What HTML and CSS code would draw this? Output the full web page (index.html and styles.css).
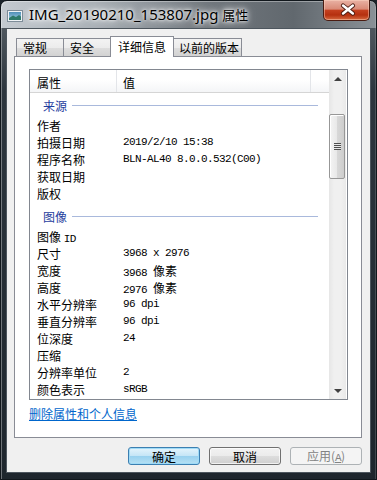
FILE: index.html
```html
<!DOCTYPE html>
<html lang="zh-CN">
<head>
    <meta charset="UTF-8">
    <meta name="viewport" content="width=device-width, initial-scale=1.0">
    <title>IMG_20190210_153807.jpg 属性</title>
    <link rel="stylesheet" href="styles.css">
</head>
<body>
    <div class="window">
        <div class="titlebar">
            <svg class="app-icon" width="16" height="12" viewBox="0 0 16 12">
                <defs>
                    <linearGradient id="sky" x1="0" y1="0" x2="0" y2="1">
                        <stop offset="0" stop-color="#4f8fb8"/>
                        <stop offset="1" stop-color="#a9d2e6"/>
                    </linearGradient>
                </defs>
                <rect x="0.5" y="0.5" width="15" height="11" fill="#eef2f5" stroke="#7d8c98"/>
                <rect x="2" y="2" width="12" height="8" fill="url(#sky)"/>
                <path d="M2 8 L6 5.5 L9 7 L12 5 L14 6.5 L14 10 L2 10 Z" fill="#2f7a6a"/>
            </svg>
            <span class="caption">IMG_20190210_153807.jpg <span class="caption-cjk">属性</span></span>
            <button class="close-btn" type="button">
                <svg width="46" height="20" viewBox="0 0 46 20">
                    <path d="M19.5 5.5 L29.5 13.5 M29.5 5.5 L19.5 13.5" stroke="#4a1a10" stroke-width="4.5" stroke-linecap="round"/>
                    <path d="M19.5 5.5 L29.5 13.5 M29.5 5.5 L19.5 13.5" stroke="#ffffff" stroke-width="2.6" stroke-linecap="round"/>
                </svg>
            </button>
        </div>

        <div class="client">
            <div class="tabs">
                <div class="tab tab-general">常规</div>
                <div class="tab tab-security">安全</div>
                <div class="tab tab-details active">详细信息</div>
                <div class="tab tab-versions">以前的版本</div>
            </div>

            <div class="panel">
                <div class="listview">
                    <div class="list-main">
                        <div class="list-head">
                            <div class="col-name">属性</div>
                            <div class="col-value">值</div>
                            <div class="col-rest"></div>
                        </div>
                        <div class="list-body">
                            <div class="group first"><span class="group-title">来源</span><span class="group-line"></span></div>
                            <div class="row"><span>作者</span><span></span></div>
                            <div class="row"><span>拍摄日期</span><span class="num">2019/2/10 15:38</span></div>
                            <div class="row"><span>程序名称</span><span class="num">BLN-AL40 8.0.0.532(C00)</span></div>
                            <div class="row"><span>获取日期</span><span></span></div>
                            <div class="row"><span>版权</span><span></span></div>

                            <div class="group"><span class="group-title">图像</span><span class="group-line"></span></div>
                            <div class="row"><span>图像 <span class="num">ID</span></span><span></span></div>
                            <div class="row"><span>尺寸</span><span class="num">3968 x 2976</span></div>
                            <div class="row"><span>宽度</span><span><span class="num">3968 </span>像素</span></div>
                            <div class="row"><span>高度</span><span><span class="num">2976 </span>像素</span></div>
                            <div class="row"><span>水平分辨率</span><span class="num">96 dpi</span></div>
                            <div class="row"><span>垂直分辨率</span><span class="num">96 dpi</span></div>
                            <div class="row"><span>位深度</span><span class="num">24</span></div>
                            <div class="row"><span>压缩</span><span></span></div>
                            <div class="row"><span>分辨率单位</span><span class="num">2</span></div>
                            <div class="row"><span>颜色表示</span><span class="num">sRGB</span></div>
                        </div>
                    </div>
                    <div class="scrollbar">
                        <div class="arrow arrow-up"></div>
                        <div class="thumb"><div class="grip"></div></div>
                        <div class="track-rest"></div>
                        <div class="arrow arrow-down"></div>
                    </div>
                </div>
                <a class="remove-link" href="#">删除属性和个人信息</a>
            </div>

            <div class="buttons">
                <button class="btn primary" type="button">确定</button>
                <button class="btn" type="button">取消</button>
                <button class="btn" type="button" disabled>应用(<u class="num">A</u>)</button>
            </div>
        </div>
    </div>
</body>
</html>
```

FILE: styles.css
```css
body {
    margin: 0;
    background: #1b232a;
    font-family: "Noto Sans CJK SC", sans-serif;
    font-size: 12px;
    color: #000;
}

/* window frame */
.window {
    width: 377px;
    height: 480px;
    box-sizing: border-box;
    border: 1px solid #11171c;
    border-radius: 7px 7px 0 0;
    padding: 0 5px 6px;
    display: flex;
    flex-direction: column;
    background:
        linear-gradient(to right, #c4cad0 0%, #aab1b7 25%, #71777d 55%, #61686e 78%, #8a9197 100%) top / 100% 27px no-repeat,
        linear-gradient(to bottom, #5d656c 0, #2d363e 90px, #1e262d 100%);
    box-shadow: inset 1px 1px 0 rgba(255, 255, 255, 0.35), inset -1px 0 0 rgba(255, 255, 255, 0.15);
}
.titlebar {
    height: 27px;
    display: flex;
    align-items: flex-start;
    flex-shrink: 0;
}
.app-icon {
    margin: 9px 0 0 1px;
}
.caption {
    margin: 4px 0 0 6px;
    font-family: "Noto Sans", "Noto Sans CJK SC", sans-serif;
    font-size: 15px;
    line-height: 18px;
    text-shadow: 0 0 6px #fff, 0 0 3px #fff, 0 0 10px rgba(255, 255, 255, 0.8);
    white-space: nowrap;
}
.caption-cjk {
    font-family: "Noto Sans CJK SC", sans-serif;
    font-size: 13px;
}
.close-btn {
    margin: -1px 1px 0 auto;
    width: 47px;
    height: 21px;
    padding: 0;
    border: 1px solid #4a1c12;
    border-top: none;
    border-radius: 0 0 5px 5px;
    background: linear-gradient(#e9b2a4 0%, #d98a77 45%, #c4401f 52%, #b5300f 75%, #d66a40 100%);
    box-shadow: inset 0 0 0 1px rgba(255, 220, 200, 0.45);
    display: flex;
    align-items: center;
    justify-content: center;
}

/* client area */
.client {
    height: 445px;
    box-sizing: border-box;
    border: 1px solid #4d565e;
    background: #f0f0f0;
    display: flex;
    flex-direction: column;
}

.tabs {
    display: flex;
    align-items: flex-start;
    height: 21px;
    margin: 7px 0 0 9px;
    position: relative;
    z-index: 1;
}
.tab {
    box-sizing: border-box;
    height: 18px;
    margin-top: 2px;
    padding-left: 6px;
    border: 1px solid #898c95;
    border-bottom: none;
    line-height: 17px;
    background: linear-gradient(#f3f3f3, #ececec 50%, #dedede 51%, #d2d2d2);
    white-space: nowrap;
}
.tab-general { width: 48px; }
.tab-security { width: 49px; margin-left: -1px; }
.tab-details { width: 64px; margin-left: -2px; }
.tab-versions { width: 69px; margin-left: -1px; padding-left: 5px; }
.tab.active {
    height: 21px;
    margin-top: 0;
    padding-left: 7px;
    line-height: 19px;
    background: #fff;
    position: relative;
    z-index: 2;
}

.panel {
    box-sizing: border-box;
    width: 348px;
    height: 382px;
    margin: -1px 0 0 7px;
    border: 1px solid #898c95;
    background: #fff;
}

/* list view */
.listview {
    box-sizing: border-box;
    width: 319px;
    height: 331px;
    margin: 12px 0 0 14px;
    border: 1px solid #828790;
    display: flex;
}
.list-main {
    width: 299px;
    overflow: hidden;
}
.list-head {
    height: 23px;
    box-sizing: border-box;
    display: flex;
    border-bottom: 1px solid #d5d5d5;
    background: linear-gradient(#ffffff, #ffffff 45%, #f4f5f7 100%);
}
.list-head div {
    padding-top: 4px;
    line-height: 18px;
    border-right: 1px solid #e3e5e9;
}
.col-name { width: 79px; padding-left: 7px; }
.col-value { width: 187px; padding-left: 6px; }
.col-rest { flex: 1; border-right: none !important; }

.row {
    display: grid;
    grid-template-columns: 86px 1fr;
    padding-left: 7px;
    height: 17px;
    line-height: 17px;
    white-space: nowrap;
}
.num {
    font-family: "Liberation Mono", monospace;
    font-size: 11px;
    letter-spacing: -0.6px;
}

.group {
    display: flex;
    align-items: center;
    height: 23px;
    padding: 3px 11px 0 13px;
}
.group.first {
    height: 24px;
    padding-top: 0;
}
.group-title {
    color: #1f3e9e;
}
.group-line {
    flex: 1;
    height: 1px;
    margin-left: 5px;
    background: #a9b9dc;
}

/* scrollbar */
.scrollbar {
    width: 17px;
    display: flex;
    flex-direction: column;
    background: linear-gradient(to right, #e6e6e6, #f0f0f0 30%, #f0f0f0 70%, #e9e9e9);
}
.arrow {
    height: 17px;
    display: flex;
    align-items: center;
    justify-content: center;
}
.arrow::after {
    content: "";
    border-left: 4px solid transparent;
    border-right: 4px solid transparent;
}
.arrow-up::after { border-bottom: 4px solid #404040; }
.arrow-down::after { border-top: 4px solid #404040; }
.thumb {
    box-sizing: border-box;
    height: 65px;
    margin: 27px 1px 0 0;
    border: 1px solid #979797;
    border-radius: 2px;
    background: linear-gradient(to right, #f4f4f4, #e8e8e8 50%, #d8d8d8 51%, #cdcdcd);
    box-shadow: inset 1px 1px 0 #fff;
    display: flex;
    align-items: center;
    justify-content: center;
}
.grip {
    width: 7px;
    height: 7px;
    background: repeating-linear-gradient(#4e4e4e 0, #4e4e4e 1px, #e8e8e8 1px, #e8e8e8 2px);
}
.track-rest { flex: 1; }

.remove-link {
    display: block;
    width: max-content;
    margin: 5px 0 0 14px;
    line-height: 18px;
    color: #0066cc;
}

/* dialog buttons */
.buttons {
    display: flex;
    justify-content: flex-end;
    gap: 9px;
    margin-top: 9px;
    padding-right: 8px;
}
.btn {
    width: 72px;
    height: 18px;
    padding: 0;
    box-sizing: border-box;
    font-family: "Noto Sans CJK SC", sans-serif;
    font-size: 12px;
    line-height: 15px;
    color: #000;
    border: 1px solid #707070;
    border-radius: 3px;
    background: linear-gradient(#f2f2f2, #ebebeb 50%, #dddddd 51%, #cfcfcf);
    box-shadow: inset 0 0 0 1px rgba(255, 255, 255, 0.7);
}
.btn.primary {
    border-color: #3c7fb1;
    background: linear-gradient(#e5f4fc, #c4e5f6 50%, #98d1ef 51%, #b6e0f3);
    box-shadow: inset 0 0 0 1px #9fdbf7;
}
.btn:disabled {
    border-color: #adb2b5;
    background: #f4f4f4;
    color: #838383;
    box-shadow: none;
}
```
